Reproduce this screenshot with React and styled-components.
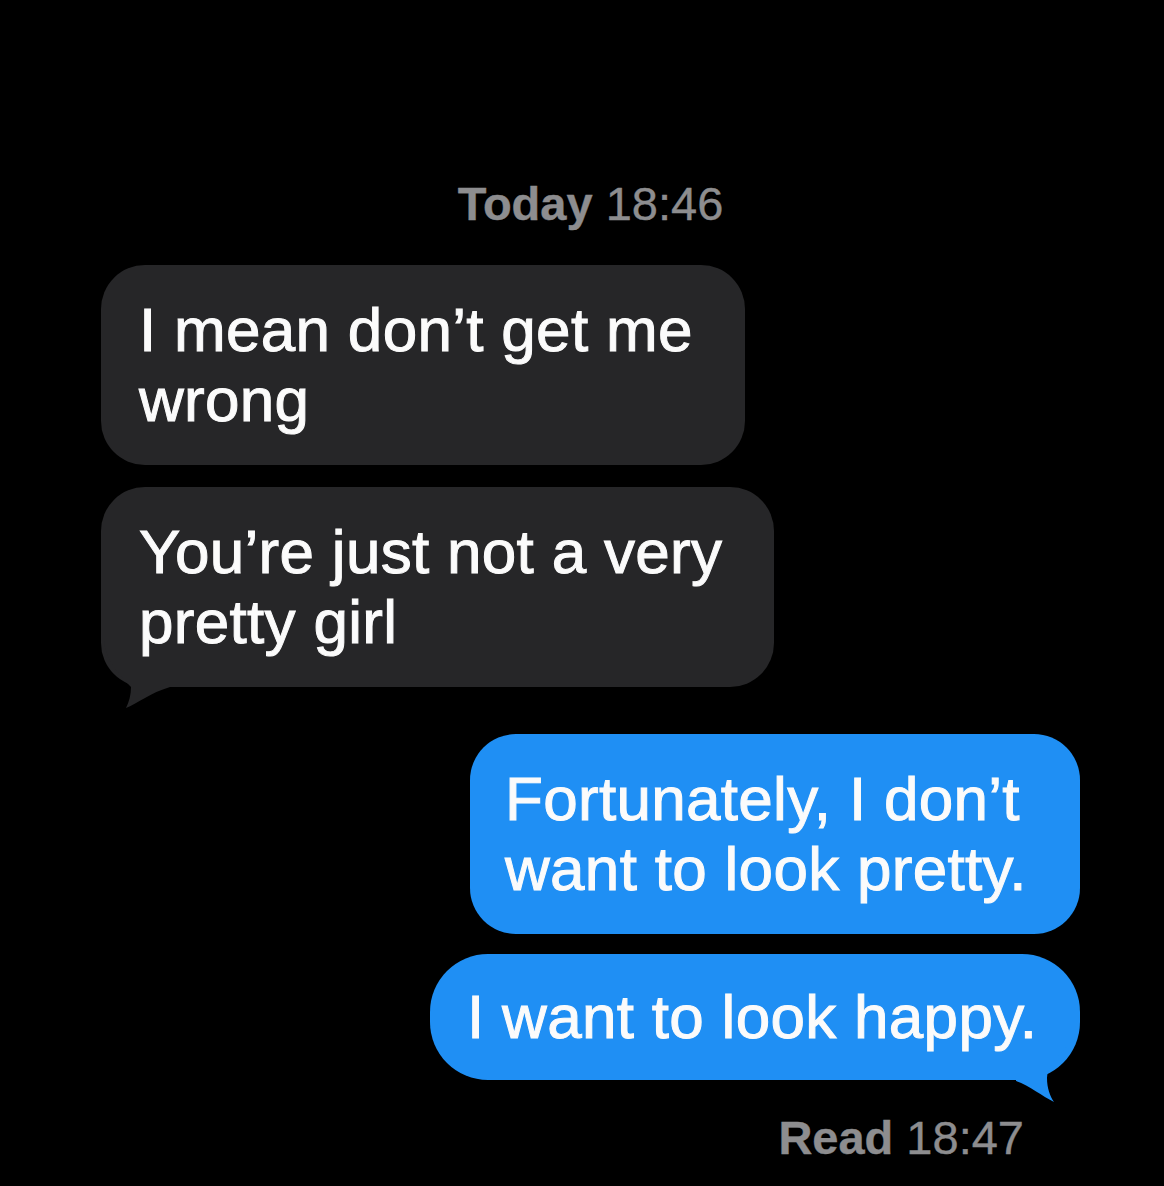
import React from "react";
import styled, { createGlobalStyle } from "styled-components";

const GlobalStyle = createGlobalStyle`
  html, body {
    margin: 0;
    padding: 0;
    background: #000;
  }
  body {
    font-family: "Liberation Sans", Arial, sans-serif;
  }
`;

const Thread = styled.div`
  width: 1164px;
  min-height: 1186px;
  box-sizing: border-box;
  padding: 180px 84px 0 101px;
  background: #000;
  display: flex;
  flex-direction: column;
`;

const Stamp = styled.div`
  font-size: 47px;
  line-height: 47px;
  color: #8d8d8f;
  white-space: nowrap;
  -webkit-text-stroke: 0.4px #8d8d8f;
  align-self: ${(p) => (p.$right ? "flex-end" : "center")};
  margin: ${(p) => (p.$right ? "34px 56px 0 0" : "0 0 38px 0")};

  b {
    font-weight: 700;
  }
`;

const Bubble = styled.div`
  position: relative;
  z-index: 0;
  box-sizing: border-box;
  width: ${(p) => p.$w}px;
  align-self: ${(p) => (p.$me ? "flex-end" : "flex-start")};
  margin-top: ${(p) => p.$gap || 0}px;
  padding: ${(p) => p.$py || 30}px 20px ${(p) => p.$py || 30}px ${(p) => p.$px}px;
  border-radius: ${(p) => p.$r || 44}px;
  background: ${(p) => (p.$me ? "#1f8ff4" : "#262628")};
  color: #fbfbfb;
  font-size: 62px;
  line-height: 70px;
  letter-spacing: 0.3px;
  white-space: nowrap;
  -webkit-text-stroke: 1px #fbfbfb;
`;

// the little curled tail under the last bubble of a group, kept behind the text
const Tail = styled.svg`
  position: absolute;
  z-index: -1;
  bottom: -24px;
  width: 80px;
  height: 70px;
  ${(p) => (p.$me ? "right: 0;" : "left: 0;")}
`;

const messages = [
  { lines: ["I mean don’t get me", "wrong"], w: 644, px: 38 },
  { lines: ["You’re just not a very", "pretty girl"], w: 673, px: 38, gap: 22, tail: true },
  { lines: ["Fortunately, I don’t", "want to look pretty."], w: 610, px: 35, gap: 47, me: true, r: 46 },
  { lines: ["I want to look happy."], w: 650, px: 37, gap: 20, me: true, r: 58, py: 28, tail: true },
];

const App = () => {
  return (
    <>
      <GlobalStyle />
      <Thread>
        <Stamp>
          <b>Today</b> 18:46
        </Stamp>
        {messages.map((m, i) => (
          <Bubble key={i} $w={m.w} $px={m.px} $gap={m.gap} $me={m.me} $r={m.r} $py={m.py}>
            {m.lines.map((l, j) => (
              <React.Fragment key={j}>
                {j > 0 && <br />}
                {l}
              </React.Fragment>
            ))}
            {m.tail && !m.me && (
              <Tail viewBox="0 0 80 70">
                <path d="M3 0 C5 20 19 34 30 46 C30 54 28 61 25 67 C37 62 49 52 69 46 L69 0 Z" fill="#262628" />
              </Tail>
            )}
            {m.tail && m.me && (
              <Tail $me viewBox="0 0 80 70">
                <path d="M76 0 C68 16 48 26 47 44 C47 54 50 62 54 68 C42 62 30 52 16 47 L16 0 Z" fill="#1f8ff4" />
              </Tail>
            )}
          </Bubble>
        ))}
        <Stamp $right>
          <b>Read</b> 18:47
        </Stamp>
      </Thread>
    </>
  );
};

export default App;
